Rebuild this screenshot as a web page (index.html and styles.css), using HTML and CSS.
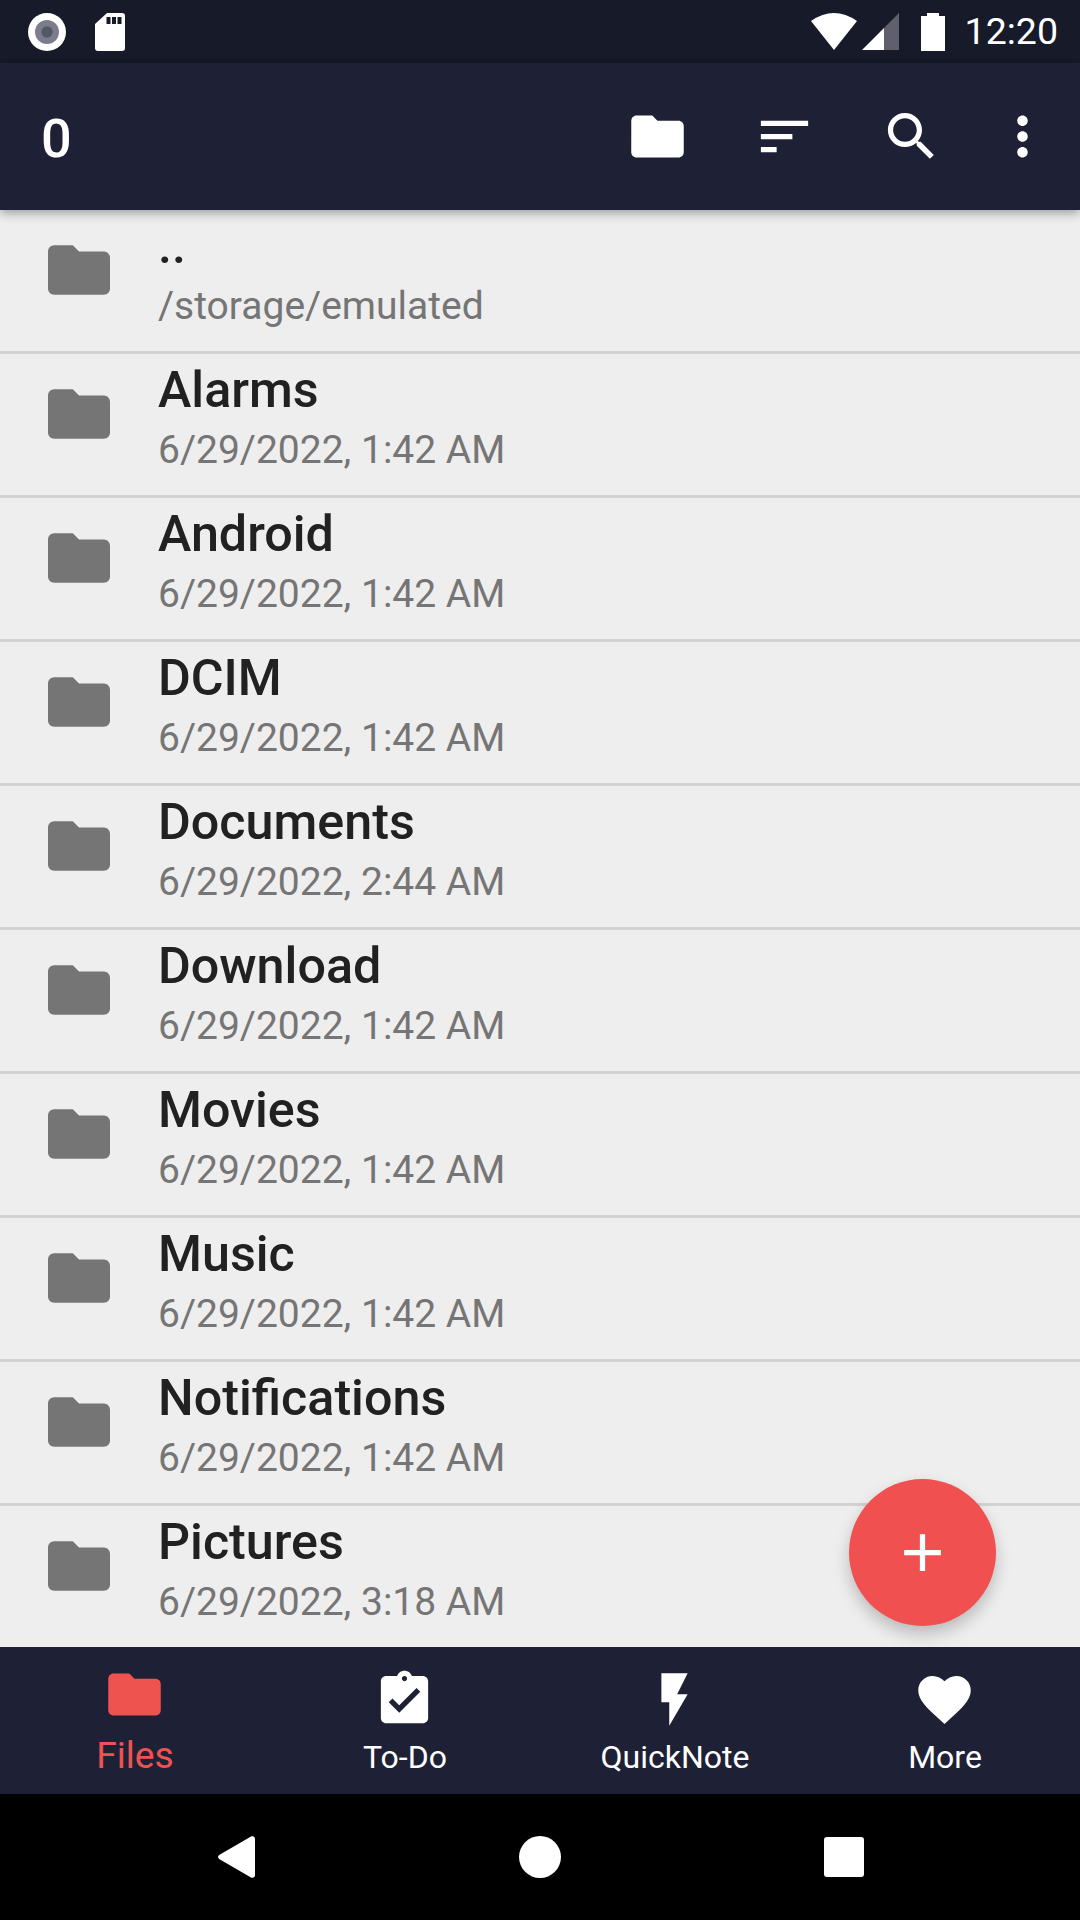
FILE: index.html
```html
<!DOCTYPE html>
<html lang="en">
<head>
<meta charset="utf-8">
<title>Files</title>
<link rel="stylesheet" href="styles.css">
</head>
<body>
<div class="screen">
  <div class="status">
    <div class="status-left">
      <svg class="ic-rec" viewBox="0 0 38 38"><circle cx="19" cy="19" r="19" fill="#fff"/><circle cx="19" cy="19" r="12" fill="#7b7d8a"/><circle cx="19" cy="19" r="5.7" fill="#555766"/></svg>
      <svg class="ic-sd" viewBox="0 0 30 38"><path fill="#fff" d="M12 0H27a3 3 0 0 1 3 3V35a3 3 0 0 1-3 3H3a3 3 0 0 1-3-3V11z"/><path fill="#171a28" d="M11.5 4h4v7h-4zM17 4h4v7h-4zM22.500 4h4v7h-4z"/></svg>
    </div>
    <div class="status-right">
      <svg class="ic-wifi" viewBox="0 0 46 37"><path fill="#fff" d="M0 8Q23-8 46 8L23 37z"/></svg>
      <svg class="ic-signal" viewBox="0 0 37 37"><path fill="#5f606c" d="M22 15L37 0V37H22z"/><path fill="#fff" d="M22 15V37H0z"/></svg>
      <svg class="ic-batt" viewBox="0 0 24 38"><path fill="#fff" d="M6 0h12v3h6v35H0V3h6z"/></svg>
      <span class="time">12:20</span>
    </div>
  </div>

  <header class="appbar">
    <span class="count">0</span>
    <div class="actions">
      <button class="act"><svg class="ic24" viewBox="0 0 24 24"><path fill="#fff" d="M10 4H4c-1.100 0-1.990.9-1.990 2L2 18c0 1.100.9 2 2 2h16c1.100 0 2-.9 2-2V8c0-1.100-.9-2-2-2h-8l-2-2z"/></svg></button>
      <button class="act"><svg class="ic24" viewBox="0 0 24 24"><path fill="#fff" d="M3 18h6v-2H3v2zM3 6v2h18V6H3zm0 7h12v-2H3v2z"/></svg></button>
      <button class="act"><svg class="ic24" viewBox="0 0 24 24"><path fill="#fff" d="M15.500 14h-.79l-.28-.27C15.410 12.590 16 11.110 16 9.500 16 5.910 13.090 3 9.500 3S3 5.910 3 9.500 5.910 16 9.500 16c1.610 0 3.090-.59 4.230-1.570l.27.28v.79l5 4.990L20.490 19l-4.990-5zm-6 0C7.010 14 5 11.990 5 9.500S7.010 5 9.500 5 14 7.010 14 9.500 11.990 14 9.500 14z"/></svg></button>
      <button class="act act-more"><svg class="ic24" viewBox="0 0 24 24"><path fill="#fff" d="M12 8c1.100 0 2-.9 2-2s-.9-2-2-2-2 .9-2 2 .9 2 2 2zm0 2c-1.100 0-2 .9-2 2s.9 2 2 2 2-.9 2-2-.9-2-2-2zm0 6c-1.100 0-2 .9-2 2s.9 2 2 2 2-.9 2-2-.9-2-2-2z"/></svg></button>
    </div>
  </header>

  <main class="list">
    <div class="row"><svg class="row-ic" viewBox="2 4 20 16"><path d="M10 4H4c-1.100 0-1.990.9-1.990 2L2 18c0 1.100.9 2 2 2h16c1.100 0 2-.9 2-2V8c0-1.100-.9-2-2-2h-8l-2-2z"/></svg><div class="row-text"><div class="name">..</div><div class="sub">/storage/emulated</div></div></div>
    <div class="row"><svg class="row-ic" viewBox="2 4 20 16"><path d="M10 4H4c-1.100 0-1.990.9-1.990 2L2 18c0 1.100.9 2 2 2h16c1.100 0 2-.9 2-2V8c0-1.100-.9-2-2-2h-8l-2-2z"/></svg><div class="row-text"><div class="name">Alarms</div><div class="sub">6/29/2022, 1:42 AM</div></div></div>
    <div class="row"><svg class="row-ic" viewBox="2 4 20 16"><path d="M10 4H4c-1.100 0-1.990.9-1.990 2L2 18c0 1.100.9 2 2 2h16c1.100 0 2-.9 2-2V8c0-1.100-.9-2-2-2h-8l-2-2z"/></svg><div class="row-text"><div class="name">Android</div><div class="sub">6/29/2022, 1:42 AM</div></div></div>
    <div class="row"><svg class="row-ic" viewBox="2 4 20 16"><path d="M10 4H4c-1.100 0-1.990.9-1.990 2L2 18c0 1.100.9 2 2 2h16c1.100 0 2-.9 2-2V8c0-1.100-.9-2-2-2h-8l-2-2z"/></svg><div class="row-text"><div class="name">DCIM</div><div class="sub">6/29/2022, 1:42 AM</div></div></div>
    <div class="row"><svg class="row-ic" viewBox="2 4 20 16"><path d="M10 4H4c-1.100 0-1.990.9-1.990 2L2 18c0 1.100.9 2 2 2h16c1.100 0 2-.9 2-2V8c0-1.100-.9-2-2-2h-8l-2-2z"/></svg><div class="row-text"><div class="name">Documents</div><div class="sub">6/29/2022, 2:44 AM</div></div></div>
    <div class="row"><svg class="row-ic" viewBox="2 4 20 16"><path d="M10 4H4c-1.100 0-1.990.9-1.990 2L2 18c0 1.100.9 2 2 2h16c1.100 0 2-.9 2-2V8c0-1.100-.9-2-2-2h-8l-2-2z"/></svg><div class="row-text"><div class="name">Download</div><div class="sub">6/29/2022, 1:42 AM</div></div></div>
    <div class="row"><svg class="row-ic" viewBox="2 4 20 16"><path d="M10 4H4c-1.100 0-1.990.9-1.990 2L2 18c0 1.100.9 2 2 2h16c1.100 0 2-.9 2-2V8c0-1.100-.9-2-2-2h-8l-2-2z"/></svg><div class="row-text"><div class="name">Movies</div><div class="sub">6/29/2022, 1:42 AM</div></div></div>
    <div class="row"><svg class="row-ic" viewBox="2 4 20 16"><path d="M10 4H4c-1.100 0-1.990.9-1.990 2L2 18c0 1.100.9 2 2 2h16c1.100 0 2-.9 2-2V8c0-1.100-.9-2-2-2h-8l-2-2z"/></svg><div class="row-text"><div class="name">Music</div><div class="sub">6/29/2022, 1:42 AM</div></div></div>
    <div class="row"><svg class="row-ic" viewBox="2 4 20 16"><path d="M10 4H4c-1.100 0-1.990.9-1.990 2L2 18c0 1.100.9 2 2 2h16c1.100 0 2-.9 2-2V8c0-1.100-.9-2-2-2h-8l-2-2z"/></svg><div class="row-text"><div class="name">Notifications</div><div class="sub">6/29/2022, 1:42 AM</div></div></div>
    <div class="row"><svg class="row-ic" viewBox="2 4 20 16"><path d="M10 4H4c-1.100 0-1.990.9-1.990 2L2 18c0 1.100.9 2 2 2h16c1.100 0 2-.9 2-2V8c0-1.100-.9-2-2-2h-8l-2-2z"/></svg><div class="row-text"><div class="name">Pictures</div><div class="sub">6/29/2022, 3:18 AM</div></div></div>
    <button class="fab"><svg class="ic24" viewBox="0 0 24 24"><path fill="#fff" d="M19 13h-6v6h-2v-6H5v-2h6V5h2v6h6v2z"/></svg></button>
  </main>

  <nav class="tabs">
    <div class="tab active"><svg class="ic24" viewBox="0 0 24 24"><path d="M10 4H4c-1.100 0-1.990.9-1.990 2L2 18c0 1.100.9 2 2 2h16c1.100 0 2-.9 2-2V8c0-1.100-.9-2-2-2h-8l-2-2z"/></svg><span class="tab-label">Files</span></div>
    <div class="tab"><svg class="ic24" viewBox="0 0 24 24"><path d="M19 3h-4.180C14.400 1.840 13.300 1 12 1c-1.300 0-2.400.84-2.820 2H5c-1.100 0-2 .9-2 2v14c0 1.100.9 2 2 2h14c1.100 0 2-.9 2-2V5c0-1.100-.9-2-2-2zm-7 0c.55 0 1 .45 1 1s-.45 1-1 1-1-.45-1-1 .45-1 1-1zm-2 14l-4-4 1.410-1.410L10 14.170l6.590-6.590L18 9l-8 8z"/></svg><span class="tab-label">To-Do</span></div>
    <div class="tab"><svg class="ic24" viewBox="0 0 24 24"><path d="M7 2v11h3v9l7-12h-4l4-8z"/></svg><span class="tab-label">QuickNote</span></div>
    <div class="tab"><svg class="ic24" viewBox="0 0 24 24"><path d="M12 21.350l-1.450-1.320C5.400 15.360 2 12.280 2 8.500 2 5.420 4.420 3 7.500 3c1.740 0 3.410.81 4.500 2.090C13.090 3.810 14.760 3 16.500 3 19.580 3 22 5.420 22 8.500c0 3.780-3.400 6.860-8.550 11.540L12 21.350z"/></svg><span class="tab-label">More</span></div>
  </nav>

  <div class="sysnav">
    <svg class="ic-back" viewBox="0 0 37 42"><path fill="#fff" d="M2 18.500L33 .6c2-1.100 4 0 4 2.300v36.200c0 2.300-2 3.400-4 2.300L2 23.500c-2.600-1.500-2.600-3.500 0-5z"/></svg>
    <div class="home"></div>
    <div class="recent"></div>
  </div>
</div>
</body>
</html>
```
FILE: styles.css
```css
* { box-sizing: border-box; }
html, body { margin: 0; padding: 0; }
body { font-family: Roboto, "Liberation Sans", sans-serif; background: #000; }
.screen { width: 1080px; height: 1920px; display: flex; flex-direction: column; overflow: hidden; }

.status { height: 63px; flex: none; background: #171a28; display: flex; justify-content: space-between; align-items: center; padding: 0 22px 0 28px; }
.status-left, .status-right { display: flex; align-items: center; }
.status-left { gap: 29px; }
.ic-rec { width: 38px; height: 38px; display: block; }
.ic-sd { width: 30px; height: 38px; display: block; }
.ic-wifi { width: 46px; height: 37px; display: block; margin-right: 5px; }
.ic-signal { width: 37px; height: 37px; display: block; margin-right: 22px; }
.ic-batt { width: 24px; height: 38px; display: block; margin-right: 20px; }
.time { color: #fff; font-size: 37.5px; line-height: 63px; }

.appbar { height: 147px; flex: none; background: #1e2136; display: flex; justify-content: space-between; align-items: center; padding: 0 10px 0 41px; box-shadow: 0 3px 10px rgba(0,0,0,.35); position: relative; z-index: 2; }
.count { color: #fff; font-size: 54px; font-weight: 500; padding-top: 3px; }
.actions { display: flex; }
.act { width: 127px; height: 63px; padding: 0; border: 0; background: none; display: flex; align-items: center; justify-content: center; }
.act-more { width: 95px; }
.ic24 { width: 63px; height: 63px; display: block; flex: none; }

.list { flex: 1; min-height: 0; background: #eee; overflow: hidden; position: relative; }
.row { height: 144px; flex: none; border-bottom: 3px solid #d2d2d2; display: flex; align-items: flex-start; padding: 8px 0 0 48px; }
.row-ic { width: 62px; height: 50px; flex: none; fill: #757575; margin: 27px 48px 0 0; }
.row-text { display: flex; flex-direction: column; }
.name { font-size: 50.25px; font-weight: 500; line-height: 56px; color: #212121; margin-bottom: 7px; }
.sub { font-size: 39px; line-height: 50px; color: #757575; }

.fab { position: absolute; left: 849px; top: 1269px; width: 147px; height: 147px; border: 0; padding: 0; border-radius: 50%; background: #f15050; box-shadow: 0 8px 16px rgba(0,0,0,.22); display: flex; align-items: center; justify-content: center; }

.tabs { height: 147px; flex: none; background: #1e2136; display: grid; grid-template-columns: repeat(4, 1fr); }
.tab { display: flex; flex-direction: column; align-items: center; padding-top: 21px; color: #fff; fill: #fff; }
.tab .ic24 { margin-left: -2px; }
.tab-label { font-size: 32px; line-height: 40px; margin-top: 6px; }
.tab.active { color: #ef5350; fill: #ef5350; padding-top: 16px; }
.tab.active .tab-label { font-size: 37.25px; line-height: 44px; margin-top: 7px; }

.sysnav { height: 126px; flex: none; background: #000; display: flex; align-items: center; padding: 0 0 0 218px; }
.ic-back { width: 37px; height: 42px; display: block; margin-right: 264px; }
.home { width: 42px; height: 42px; border-radius: 50%; background: #fff; margin-right: 263px; }
.recent { width: 40px; height: 40px; border-radius: 3px; background: #fff; }
```
